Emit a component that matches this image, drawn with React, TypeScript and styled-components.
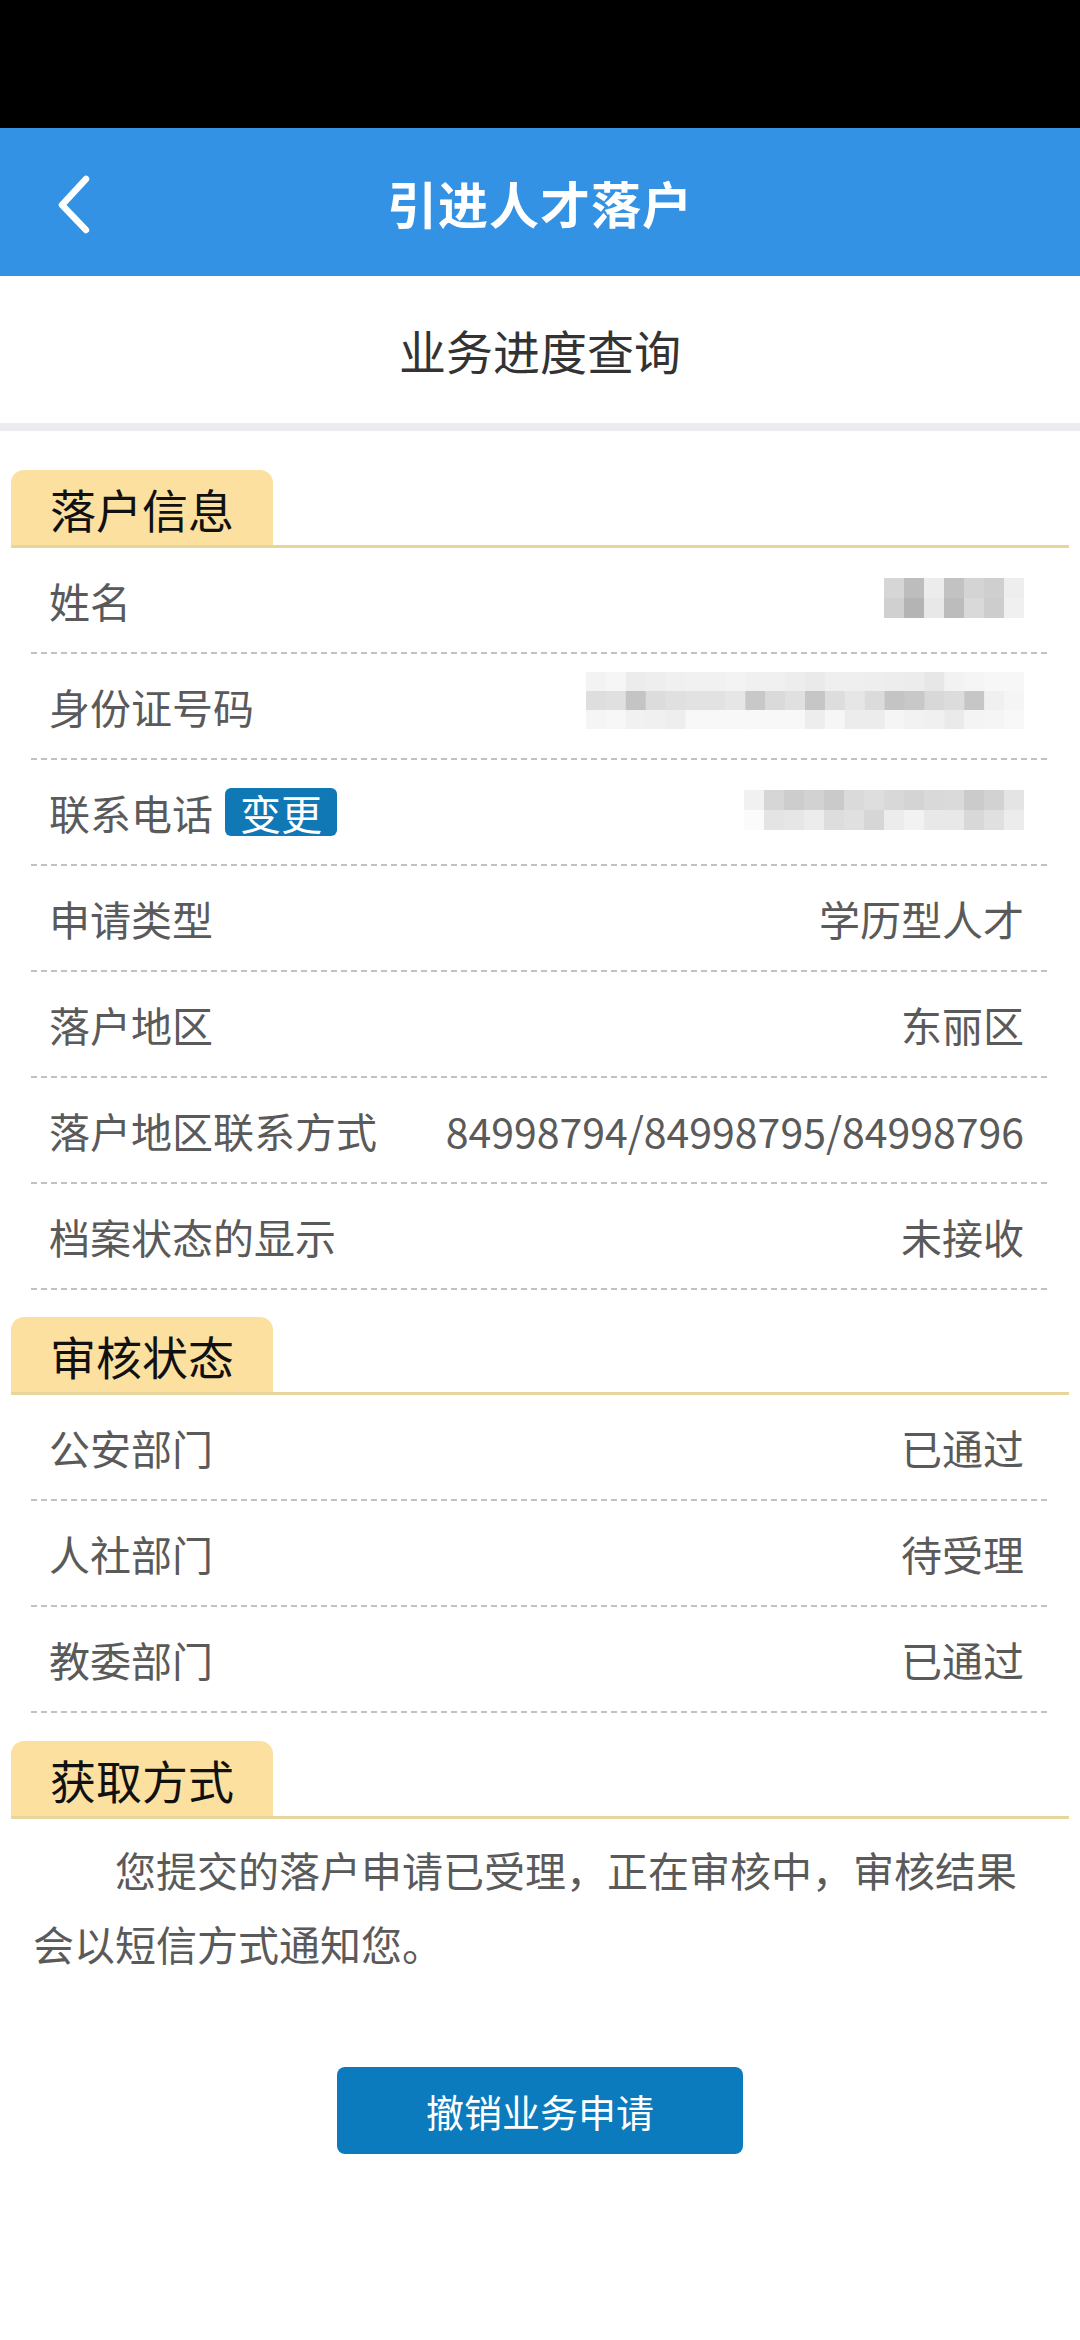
import React from 'react';
import styled, { createGlobalStyle } from 'styled-components';

const GlobalStyle = createGlobalStyle`
  html, body {
    margin: 0;
    padding: 0;
    background: #ffffff;
  }
  body {
    font-family: "Noto Sans CJK SC", "Noto Sans", sans-serif;
  }
`;

const Page = styled.div`
  width: 1080px;
  min-height: 2340px;
  background: #fff;
  display: flex;
  flex-direction: column;
`;

const StatusBar = styled.div`
  height: 128px;
  background: #000;
`;

const Header = styled.div`
  height: 148px;
  background: #3492e4;
  display: flex;
  align-items: center;
  justify-content: center;
  position: relative;
`;

const BackButton = styled.div`
  position: absolute;
  left: 52px;
  top: 46px;
  width: 44px;
  height: 60px;
`;

const Title = styled.h1`
  margin: 0;
  color: #fff;
  font-size: 50px;
  font-weight: 700;
  letter-spacing: 1px;
`;

const SubTitleBar = styled.div`
  height: 147px;
  display: flex;
  align-items: center;
  justify-content: center;
  font-size: 47px;
  color: #333;
  border-bottom: 8px solid #ececf0;
`;

const Section = styled.section<{ $top: number }>`
  margin: ${(p) => p.$top}px 11px 0;
`;

const TabLine = styled.div`
  border-bottom: 3px solid #e8d59b;
  display: flex;
`;

const Tab = styled.div`
  height: 75px;
  padding: 0 39px;
  background: #fce0a0;
  border-radius: 13px 13px 0 0;
  display: flex;
  align-items: center;
  font-size: 46px;
  color: #111;
`;

const Rows = styled.div`
  margin: 0 20px;
`;

const Row = styled.div`
  height: 106px;
  box-sizing: border-box;
  padding: 0 25px 2px 18px;
  display: flex;
  align-items: center;
  justify-content: space-between;
  background: repeating-linear-gradient(90deg, #c2c2c2 0 6px, transparent 6px 10px) left bottom / 100% 2px no-repeat;
  font-size: 41px;
  color: #5a5a5a;
`;

const Label = styled.div`
  display: flex;
  align-items: center;
  gap: 12px;
  white-space: nowrap;
`;

const Badge = styled.span`
  display: inline-flex;
  align-items: center;
  justify-content: center;
  height: 48px;
  padding: 0 15px;
  border-radius: 6px;
  background: #1178b6;
  color: #fff;
  font-size: 41px;
`;

const Value = styled.div`
  white-space: nowrap;
  font-size: 41px;
`;

const Notice = styled.p`
  margin: 0;
  padding: 13px 33px 0;
  font-size: 41px;
  line-height: 74px;
  text-indent: 2em;
  color: #5a5a5a;
`;

const ButtonWrap = styled.div`
  display: flex;
  justify-content: center;
  margin-top: 87px;
`;

const CancelButton = styled.button`
  width: 406px;
  height: 87px;
  border: none;
  border-radius: 8px;
  background: #0b7bbd;
  color: #fff;
  font-family: "Noto Sans CJK SC", sans-serif;
  font-size: 38px;
  cursor: pointer;
`;

const Mosaic: React.FC<{ width: number; height: number; shades: string[][] }> = ({ width, height, shades }) => {
  const cols = shades[0].length;
  const rows = shades.length;
  const cw = width / cols;
  const ch = height / rows;
  return (
    <svg width={width} height={height} viewBox={`0 0 ${width} ${height}`}>
      {shades.map((line, r) =>
        line.map((c, i) => <rect key={`${r}-${i}`} x={i * cw} y={r * ch} width={cw + 0.5} height={ch + 0.5} fill={c} />)
      )}
    </svg>
  );
};

const nameShades = [
  ['#d6d6d6', '#bdbdbd', '#ececec', '#c2c2c2', '#d4d4d4', '#cfcfcf', '#eeeeee'],
  ['#d0d0d0', '#b4b4b4', '#e8e8e8', '#bcbcbc', '#d9d9d9', '#cdcdcd', '#f0f0f0'],
];

const idShades = [
  ['#f3f3f3', '#f6f6f6', '#ececec', '#eeeeee', '#f0f0f0', '#f1f1f1', '#f1f1f1', '#f3f3f3', '#f0f0f0', '#f0f0f0', '#ededed', '#eaeaea', '#efefef', '#efefef', '#eeeeee', '#ededed', '#ececec', '#e7e7e7', '#f2f2f2', '#f5f5f5', '#f7f7f7', '#f7f7f7'],
  ['#dedede', '#e0e0e0', '#c4c4c4', '#dcdcdc', '#e0e0e0', '#e2e2e2', '#e2e2e2', '#e6e6e6', '#c8c8c8', '#dadada', '#e0e0e0', '#c6c6c6', '#dddddd', '#e6e6e6', '#dbdbdb', '#c4c4c4', '#c8c8c8', '#d8d8d8', '#dcdcdc', '#c6c6c6', '#f0f0f0', '#f5f5f5'],
  ['#f5f5f5', '#f7f7f7', '#f1f1f1', '#f0f0f0', '#eeeeee', '#f8f8f8', '#f8f8f8', '#f8f8f8', '#f8f8f8', '#f8f8f8', '#f8f8f8', '#ededed', '#f6f6f6', '#ececec', '#ececec', '#f5f5f5', '#f2f2f2', '#f0f0f0', '#eaeaea', '#f4f4f4', '#f5f5f5', '#f8f8f8'],
];

const phoneShades = [
  ['#f1f1f1', '#d6d6d6', '#cdcdcd', '#d2d2d2', '#cacaca', '#dadada', '#dedede', '#d8d8d8', '#d4d4d4', '#d9d9d9', '#dadada', '#cbcbcb', '#d2d2d2', '#e4e4e4'],
  ['#fbfbfb', '#e4e4e4', '#e6e6e6', '#ececec', '#dddddd', '#e0e0e0', '#d6d6d6', '#ececec', '#f2f2f2', '#e8e8e8', '#e8e8e8', '#d8d8d8', '#e0e0e0', '#ececec'],
];

type Item = { label: string; value: React.ReactNode; badge?: string };

const info: Item[] = [
  { label: '姓名', value: <Mosaic width={140} height={40} shades={nameShades} /> },
  { label: '身份证号码', value: <Mosaic width={438} height={57} shades={idShades} /> },
  { label: '联系电话', badge: '变更', value: <Mosaic width={280} height={40} shades={phoneShades} /> },
  { label: '申请类型', value: '学历型人才' },
  { label: '落户地区', value: '东丽区' },
  { label: '落户地区联系方式', value: '84998794/84998795/84998796' },
  { label: '档案状态的显示', value: '未接收' },
];

const review: Item[] = [
  { label: '公安部门', value: '已通过' },
  { label: '人社部门', value: '待受理' },
  { label: '教委部门', value: '已通过' },
];

const InfoRows: React.FC<{ items: Item[] }> = ({ items }) => (
  <Rows>
    {items.map((it) => (
      <Row key={it.label}>
        <Label>
          {it.label}
          {it.badge && <Badge>{it.badge}</Badge>}
        </Label>
        <Value>{it.value}</Value>
      </Row>
    ))}
  </Rows>
);

export default function App() {
  return (
    <Page>
      <GlobalStyle />
      <StatusBar />
      <Header>
        <BackButton>
          <svg width="44" height="60" viewBox="0 0 44 60">
            <polyline points="34,5 10,31 34,56" fill="none" stroke="#fff" strokeWidth="6.5" strokeLinecap="round" strokeLinejoin="round" />
          </svg>
        </BackButton>
        <Title>引进人才落户</Title>
      </Header>
      <SubTitleBar>业务进度查询</SubTitleBar>

      <Section $top={39}>
        <TabLine>
          <Tab>落户信息</Tab>
        </TabLine>
        <InfoRows items={info} />
      </Section>

      <Section $top={27}>
        <TabLine>
          <Tab>审核状态</Tab>
        </TabLine>
        <InfoRows items={review} />
      </Section>

      <Section $top={28}>
        <TabLine>
          <Tab>获取方式</Tab>
        </TabLine>
      </Section>
      <Notice>您提交的落户申请已受理，正在审核中，审核结果会以短信方式通知您。</Notice>

      <ButtonWrap>
        <CancelButton>撤销业务申请</CancelButton>
      </ButtonWrap>
    </Page>
  );
}
